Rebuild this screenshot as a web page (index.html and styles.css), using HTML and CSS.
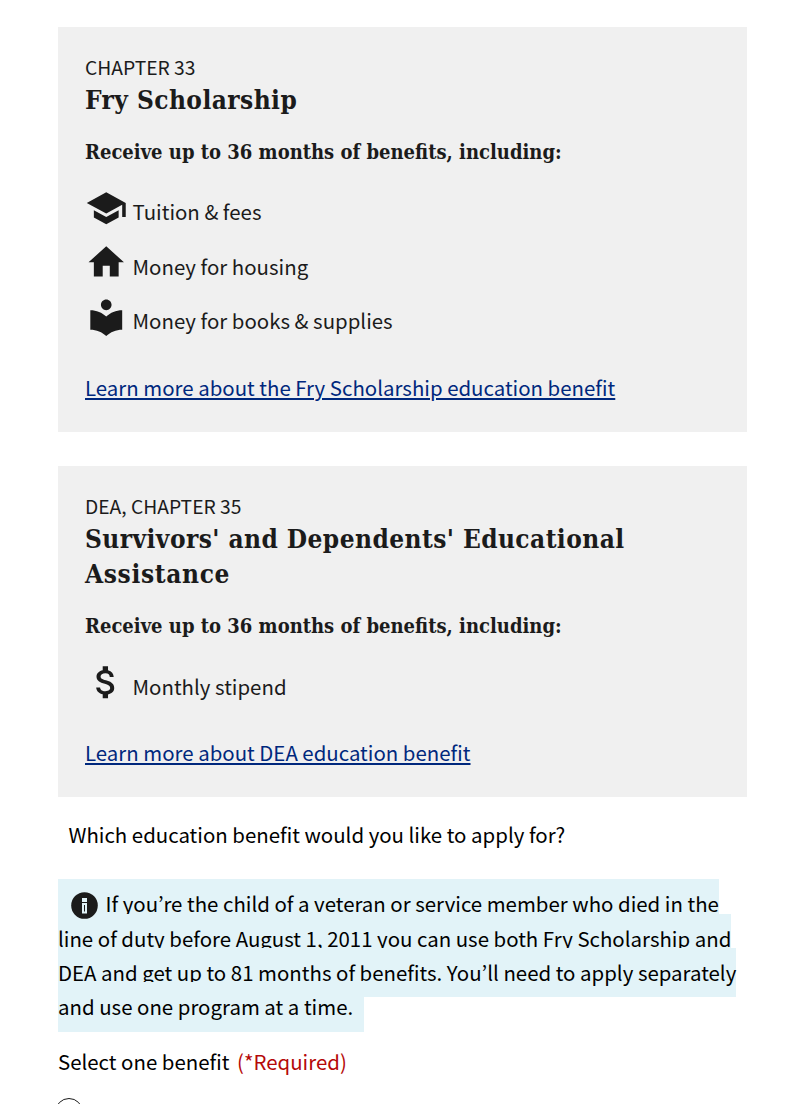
FILE: index.html
```html
<!DOCTYPE html>
<html lang="en">
<head>
<meta charset="utf-8">
<title>Education benefits</title>
<link rel="stylesheet" href="styles.css">
</head>
<body>
<main class="page">
  <section class="card">
    <p class="chapter">CHAPTER 33</p>
    <h2 class="title">Fry Scholarship</h2>
    <h3 class="subtitle">Receive up to 36 months of benefits, including:</h3>
    <ul class="benefits">
      <li><svg class="icon" viewBox="0 0 24 24"><path d="M5 13.18v4L12 21l7-3.82v-4L12 17l-7-3.82zM12 3L1 9l11 6 9-4.91V17h2V9L12 3z"/></svg><span>Tuition &amp; fees</span></li>
      <li><svg class="icon" viewBox="0 0 24 24"><path d="M10 20v-6h4v6h5v-8h3L12 3 2 12h3v8z"/></svg><span>Money for housing</span></li>
      <li><svg class="icon" viewBox="0 0 24 24"><path d="M12 11.55C9.64 9.35 6.48 8 3 8v11c3.48 0 6.64 1.35 9 3.55 2.36-2.19 5.52-3.55 9-3.55V8c-3.48 0-6.64 1.35-9 3.55zM12 8c1.66 0 3-1.34 3-3s-1.34-3-3-3-3 1.34-3 3 1.34 3 3 3z"/></svg><span>Money for books &amp; supplies</span></li>
    </ul>
    <a class="link" href="#">Learn more about the Fry Scholarship education benefit</a>
  </section>
  <section class="card">
    <p class="chapter">DEA, CHAPTER 35</p>
    <h2 class="title">Survivors' and Dependents' Educational<br><span class="wide">Assistance</span></h2>
    <h3 class="subtitle">Receive up to 36 months of benefits, including:</h3>
    <ul class="benefits">
      <li><svg class="icon" viewBox="0 0 24 24"><path d="M11.8 10.9c-2.27-.59-3-1.2-3-2.15 0-1.09 1.01-1.85 2.7-1.85 1.78 0 2.44.85 2.5 2.1h2.21c-.07-1.72-1.12-3.3-3.21-3.81V3h-3v2.16c-1.94.42-3.5 1.68-3.5 3.61 0 2.31 1.91 3.46 4.7 4.13 2.5.6 3 1.48 3 2.41 0 .69-.49 1.79-2.7 1.79-2.06 0-2.87-.92-2.98-2.1h-2.2c.12 2.19 1.76 3.42 3.68 3.83V21h3v-2.15c1.95-.37 3.5-1.5 3.5-3.55 0-2.84-2.43-3.81-4.7-4.4z"/></svg><span>Monthly stipend</span></li>
    </ul>
    <a class="link" href="#">Learn more about DEA education benefit</a>
  </section>
  <p class="question">Which education benefit would you like to apply for?</p>
  <p class="note"><span class="highlight"><svg class="info" viewBox="0 0 27 27"><circle cx="13.5" cy="13.5" r="13.3"/><path class="info-mark" d="M12 6.9h3v2.2h-3zM12 12h3v8.4h-3z"/></svg>If you’re the child of a veteran or service member who died in the<br>line of duty before August 1, 2011 you can use both Fry Scholarship and<br>DEA and get up to 81 months of benefits. You’ll need to apply separately<br>and use one program at a time.</span></p>
  <p class="select">Select one benefit <span class="required">(*Required)</span></p>
  <span class="radio"></span>
</main>
</body>
</html>
```
FILE: styles.css
```css
* { box-sizing: border-box; }
body { margin: 0; background: #fff; }
p, h2, h3, ul { margin: 0; padding: 0; }
.page {
  width: 800px;
  height: 1104px;
  overflow: hidden;
  padding: 27px 53px 0 58px;
  font-family: "Noto Sans CJK JP", "Noto Sans", sans-serif;
  font-size: 20.43px;
  color: #1b1b1b;
  white-space: nowrap;
}
.card {
  background: #f0f0f0;
  padding: 27px 27px 27px;
  margin-bottom: 34.4px;
}
.card + .card { margin-bottom: 19.8px; }
.chapter { font-size: 19.25px; line-height: 26px; }
.title, .subtitle {
  font-family: "DejaVu Serif Condensed", "DejaVu Serif", serif;
  font-stretch: condensed;
  font-weight: 700;
}
.title { font-size: 26px; line-height: 35px; margin-top: 2.5px; letter-spacing: 0.43px; }
.wide { letter-spacing: 0.65px; }
.subtitle { font-size: 20px; line-height: 28px; margin-top: 20.4px; }
.benefits { list-style: none; margin: 17.4px 0 23.2px; }
.benefits li { display: flex; gap: 5px; line-height: 56px; height: 54.5px; }
.icon { width: 42.5px; height: 42.5px; margin-top: 3.7px; fill: #1b1b1b; }
.card + .card .icon { margin-top: 3px; }
.link {
  display: block;
  width: max-content;
  line-height: 35px;
  color: #00287d;
  text-decoration: underline;
  text-decoration-thickness: 1.5px;
  text-underline-offset: 2px;
}
.question { line-height: 34.4px; padding-left: 10.5px; color: #000; }
.note { line-height: 34.4px; margin-top: 34.6px; color: #000; }
.highlight { background: #e2f3f8; padding: 9px 10.5px 10.5px 0; }
/* Kept above the background of the following text line */
.info {
  position: relative;
  width: 27px;
  height: 27px;
  margin: 0 7.5px 0 13px;
  vertical-align: -6.8px;
  fill: #1b1b1b;
}
.info-mark { fill: #1b1b1b; stroke: #e1f3f8; stroke-width: 2; }
.select { line-height: 34.4px; margin-top: 20.4px; color: #000; }
.required { color: #b50909; margin-left: 3px; }
.radio {
  display: block;
  width: 28px;
  height: 28px;
  margin: 19px 0 0 -3px;
  border: 1px solid #1b1b1b;
  border-radius: 50%;
}
```
